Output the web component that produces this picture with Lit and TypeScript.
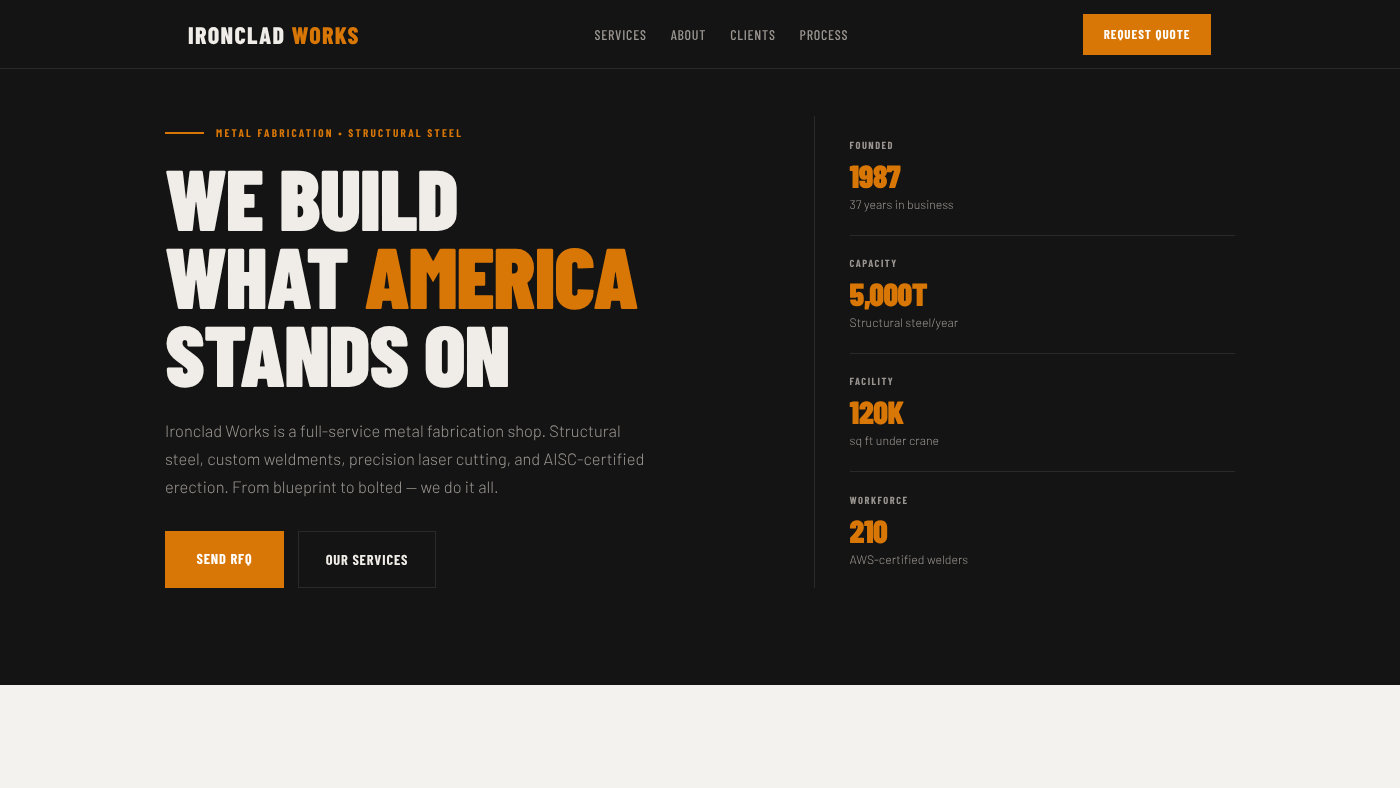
import { LitElement, html, css } from "lit";
import { customElement } from "lit/decorators.js";

const stats = [
  { label: "Founded", value: "1987", note: "37 years in business" },
  { label: "Capacity", value: "5,000T", note: "Structural steel/year" },
  { label: "Facility", value: "120K", note: "sq ft under crane" },
  { label: "Workforce", value: "210", note: "AWS-certified welders" },
];

@customElement("app-root")
export class AppRoot extends LitElement {
  static styles = css`
    :host { display: block; min-height: 788px; background: #f4f2ee; font-family: "Barlow", sans-serif; text-rendering: geometricPrecision; }
    * { box-sizing: border-box; }
    .dark { background: #141414; height: 685px; }
    nav { height: 69px; border-bottom: 1px solid #2a2a2a; display: flex; justify-content: space-between; align-items: center; padding: 0 189px 0 188px; will-change: transform; }
    .logo { font-family: "Barlow Condensed", sans-serif; font-weight: 800; font-size: 24px; letter-spacing: 1.3px; color: #f0ede8; }
    .logo span { color: #d97706; }
    .links { display: flex; gap: 24px; }
    .links a { font-family: "Barlow Condensed", sans-serif; font-weight: 500; font-size: 14px; letter-spacing: 0.74px; color: #9a9590; }
    .cta { width: 128px; height: 41px; background: #d97706; display: flex; align-items: center; justify-content: center; font-family: "Barlow Condensed", sans-serif; font-weight: 700; font-size: 13px; letter-spacing: 0.97px; color: #fff; }
    .hero { display: grid; grid-template-columns: 1fr 421px; margin: 0 165px; padding-top: 47px; will-change: transform; }
    .left { display: flex; flex-direction: column; align-items: flex-start; }
    .eyebrow { display: flex; align-items: center; gap: 12px; font-family: "Barlow Condensed", sans-serif; font-weight: 700; font-size: 11.2px; letter-spacing: 2.25px; color: #d97706; margin-top: 11px; }
    .eyebrow::before { content: ""; width: 39px; height: 2px; margin-top: -2px; background: #d97706; }
    h1 { margin: 19px 0 0; font-family: "Barlow Condensed", sans-serif; font-weight: 900; font-size: 86px; letter-spacing: -1.05px; line-height: 78px; color: #f0ede8; }
    h1 span { color: #d97706; }
    p { margin: 25px 0 0; width: 490px; font-size: 16.45px; font-weight: 300; line-height: 28.05px; color: #9a9590; }
    .btns { display: flex; gap: 14px; margin-top: 29px; }
    .btn { height: 57px; display: flex; align-items: center; justify-content: center; font-family: "Barlow Condensed", sans-serif; font-weight: 700; font-size: 14.4px; letter-spacing: 0.85px; color: #fff; }
    .primary { width: 119px; background: #d97706; padding-bottom: 2px; }
    .ghost { width: 138px; border: 1px solid #2a2a2a; color: #f0ede8; }
    .right { border-left: 1px solid #2a2a2a; padding: 23px 0 0 34.6px; height: 472px; display: flex; flex-direction: column; gap: 21.35px; }
    .stat { flex: none; height: 96.9px; border-bottom: 1px solid #2a2a2a; }
    .stat:last-child { border-bottom: 0; }
    .lab { font-family: "Barlow Condensed", sans-serif; font-weight: 700; font-size: 10.4px; letter-spacing: 1.5px; line-height: 14px; color: #9a9590; text-transform: uppercase; }
    .val { font-family: "Barlow Condensed", sans-serif; font-weight: 900; font-size: 32px; letter-spacing: -0.5px; line-height: 32px; color: #d97706; margin-top: 7px; }
    .note { font-size: 12.3px; font-weight: 300; color: #9a9590; margin-top: 6px; }
  `;
  render() {
    return html`<div class="dark">
      <nav>
        <div class="logo">IRONCLAD <span>WORKS</span></div>
        <div class="links"><a>SERVICES</a><a>ABOUT</a><a>CLIENTS</a><a>PROCESS</a></div>
        <div class="cta">REQUEST QUOTE</div>
      </nav>
      <section class="hero">
        <div class="left">
          <div class="eyebrow">METAL FABRICATION • STRUCTURAL STEEL</div>
          <h1>WE BUILD<br />WHAT <span>AMERICA</span><br />STANDS ON</h1>
          <p>Ironclad Works is a full-service metal fabrication shop. Structural steel, custom weldments, precision laser cutting, and AISC-certified erection. From blueprint to bolted — we do it all.</p>
          <div class="btns"><div class="btn primary">SEND RFQ</div><div class="btn ghost">OUR SERVICES</div></div>
        </div>
        <div class="right">
          ${stats.map((s) => html`<div class="stat"><div class="lab">${s.label}</div><div class="val">${s.value}</div><div class="note">${s.note}</div></div>`)}
        </div>
      </section>
    </div>`;
  }
}
